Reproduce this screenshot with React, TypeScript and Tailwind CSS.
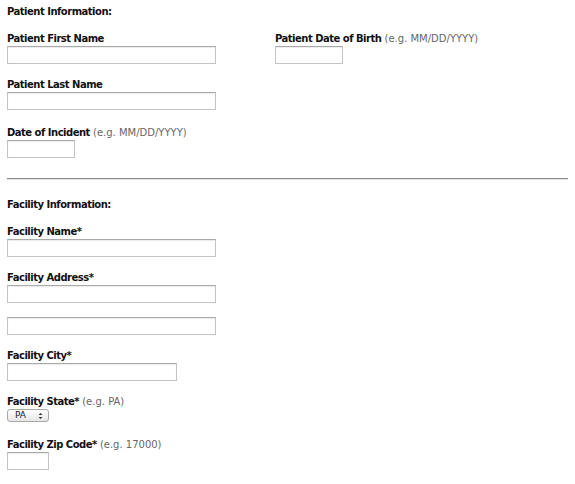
import React from 'react';

const font = { fontFamily: '"DejaVu Sans", Verdana, sans-serif' };

const Label: React.FC<{ text: string; hint?: string }> = ({ text, hint }) => (
  <div className="h-[13px] leading-[13px] text-[10px] whitespace-nowrap">
    <span className="font-bold tracking-[-0.5px] text-[#111]">{text}</span>
    {hint && <span className="text-[#666]"> {hint}</span>}
  </div>
);

const TextBox: React.FC<{ width: string }> = ({ width }) => (
  <input
    type="text"
    className={`block h-[18px] mt-px border border-[#c4c4c4] border-t-[#a9a9a9] bg-white shadow-[inset_0_1px_1px_rgba(0,0,0,0.08)] outline-none ${width}`}
  />
);

const Heading: React.FC<{ text: string; className?: string }> = ({ text, className }) => (
  <div className={`h-[13px] leading-[13px] text-[10px] font-bold tracking-[-0.5px] ${className ?? ''}`}>{text}</div>
);

const App: React.FC = () => {
  return (
    <div className="min-h-screen bg-white px-[7px] pt-[5px] text-[#111]" style={font}>
      <Heading text="Patient Information:" />

      <div className="mt-[14px] grid grid-cols-[268px_1fr]">
        <div>
          <Label text="Patient First Name" />
          <TextBox width="w-[209px]" />
        </div>
        <div>
          <Label text="Patient Date of Birth" hint="(e.g. MM/DD/YYYY)" />
          <TextBox width="w-[68px]" />
        </div>
      </div>

      <div className="mt-[14px]">
        <Label text="Patient Last Name" />
        <TextBox width="w-[209px]" />
      </div>

      <div className="mt-[16px]">
        <Label text="Date of Incident" hint="(e.g. MM/DD/YYYY)" />
        <TextBox width="w-[68px]" />
      </div>

      <hr className="mt-[20px] border-0 border-t border-t-[#8a8a8a] border-b border-b-[#e2e2e2] w-[561px]" />

      <Heading text="Facility Information:" className="mt-[18px]" />

      <div className="mt-[14px]">
        <Label text="Facility Name*" />
        <TextBox width="w-[209px]" />
      </div>

      <div className="mt-[14px]">
        <Label text="Facility Address*" />
        <TextBox width="w-[209px]" />
        <div className="mt-[14px]">
          <TextBox width="w-[209px]" />
        </div>
      </div>

      <div className="mt-[14px]">
        <Label text="Facility City*" />
        <TextBox width="w-[170px]" />
      </div>

      <div className="mt-[14px]">
        <Label text="Facility State*" hint="(e.g. PA)" />
        <div className="mt-px flex h-[13px] w-[42px] items-center justify-between rounded-[3px] border border-[#a8a8a8] bg-gradient-to-b from-white to-[#e6e6e6] pl-[7px] pr-[5px] text-[9px] leading-none text-[#222]">
          <span>PA</span>
          <svg width="5" height="8" viewBox="0 0 5 8">
            <path d="M0.5 3 L2.5 1 L4.5 3 Z" fill="#333" />
            <path d="M0.5 5 L2.5 7 L4.5 5 Z" fill="#333" />
          </svg>
        </div>
      </div>

      <div className="mt-[16px]">
        <Label text="Facility Zip Code*" hint="(e.g. 17000)" />
        <div className="mt-px">
          <TextBox width="w-[42px]" />
        </div>
      </div>
    </div>
  );
};

export default App;
